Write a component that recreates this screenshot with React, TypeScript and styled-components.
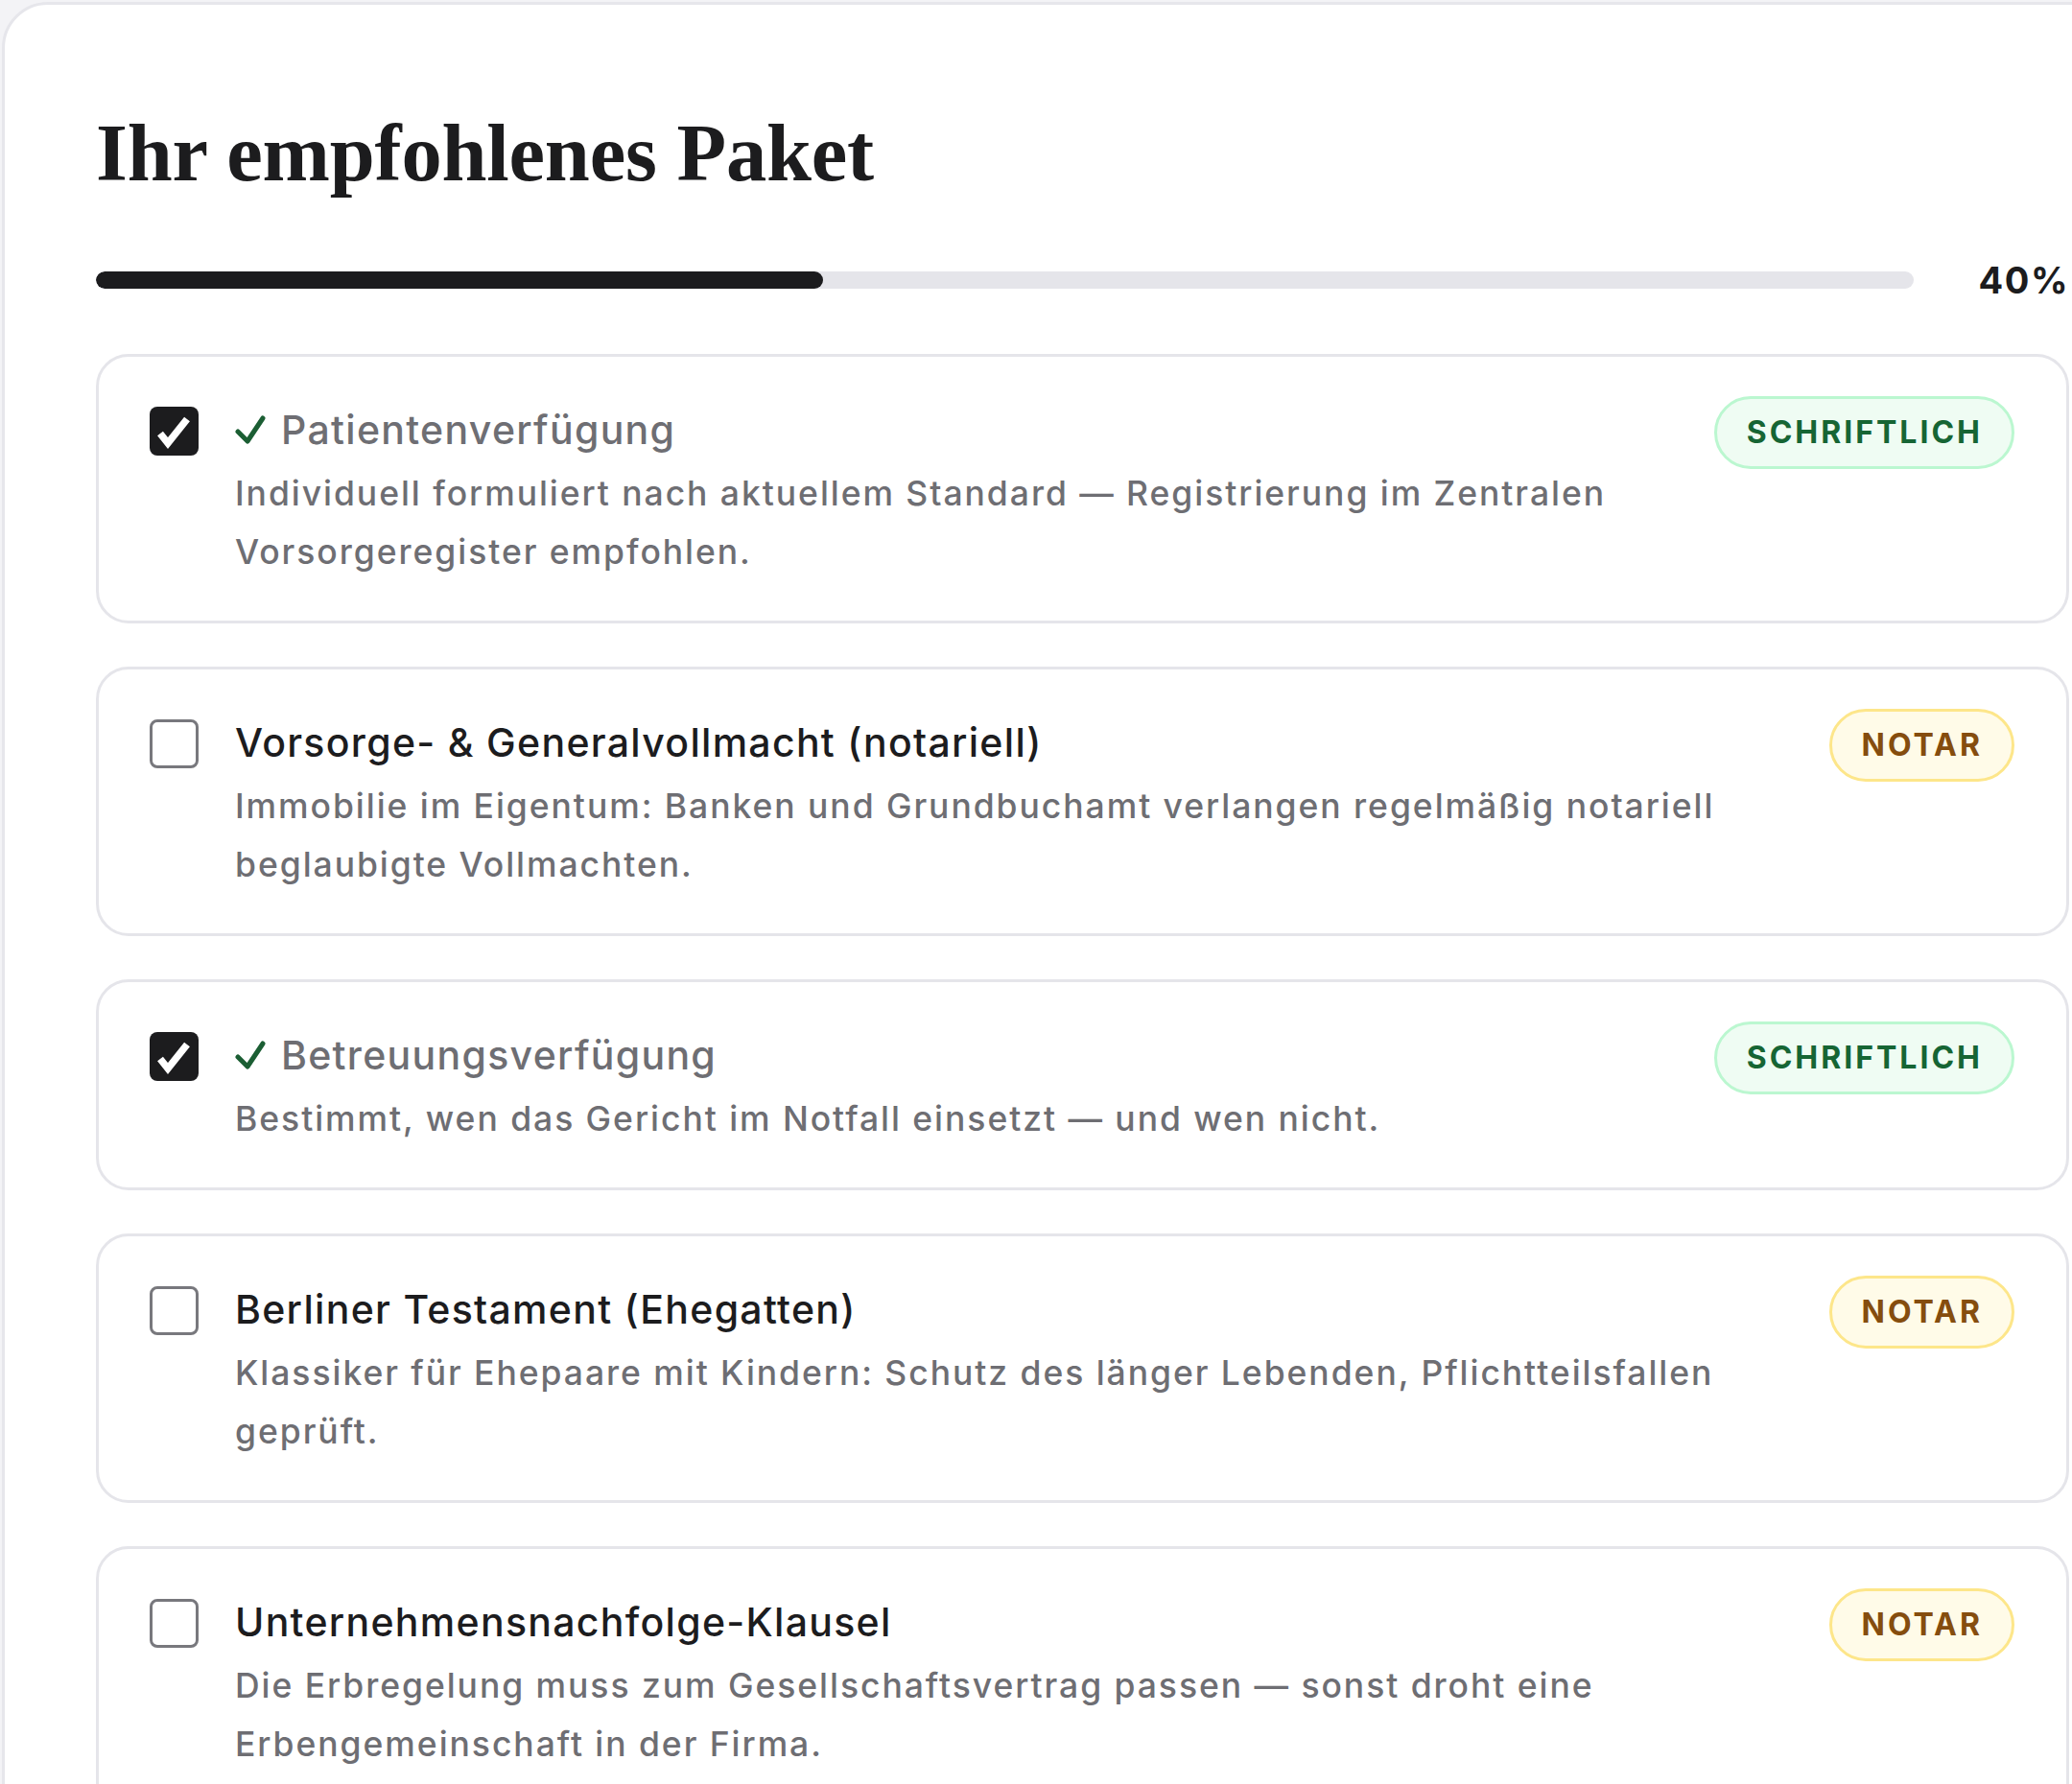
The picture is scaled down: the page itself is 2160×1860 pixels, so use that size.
import React from "react";
import styled, { createGlobalStyle } from "styled-components";

const GlobalStyle = createGlobalStyle`
  html, body {
    margin: 0;
    padding: 0;
    background: #f3f3f6;
    overflow: hidden;
  }

  body {
    font-family: Inter, "Noto Sans", sans-serif;
    color: #1c1c1e;
  }
`;

const Panel = styled.div`
  box-sizing: border-box;
  width: 2253px;
  min-height: 2000px;
  margin: 2px 0 0 2px;
  padding: 113px 95px 80px;
  background: #ffffff;
  border: 3px solid #e6e6eb;
  border-radius: 48px;
`;

const Heading = styled.h1`
  margin: 0 0 80px;
  font-family: "Liberation Serif", "Times New Roman", serif;
  font-weight: 700;
  font-size: 84.5px;
  line-height: 1;
  color: #1c1c1e;
  letter-spacing: -0.2px;
`;

const ProgressRow = styled.div`
  display: flex;
  align-items: center;
  gap: 68px;
  margin-bottom: 68px;
`;

const Track = styled.div`
  flex: 1;
  height: 18px;
  border-radius: 9px;
  background: #e5e5ea;
  overflow: hidden;
`;

const Fill = styled.div`
  height: 100%;
  border-radius: 9px;
  background: #1c1c1e;
`;

const Percent = styled.span`
  font-size: 38px;
  font-weight: 700;
  line-height: 18px;
  letter-spacing: 1.5px;
  color: #1c1c1e;
`;

const List = styled.div`
  display: flex;
  flex-direction: column;
  gap: 45px;
`;

const Card = styled.div`
  display: flex;
  align-items: flex-start;
  padding: 41px 54px 41px 53px;
  border: 3px solid #e5e5ea;
  border-radius: 34px;
  background: #ffffff;
`;

const Box = styled.div<{ $checked: boolean }>`
  box-sizing: border-box;
  flex: none;
  width: 51px;
  height: 51px;
  margin-top: 11px;
  margin-right: 38px;
  border-radius: 8px;
  display: flex;
  align-items: center;
  justify-content: center;
  background: ${(p) => (p.$checked ? "#1c1c1e" : "#ffffff")};
  border: ${(p) => (p.$checked ? "none" : "3px solid #78787d")};
`;

const Body = styled.div`
  flex: 1;
  min-width: 0;
  padding-right: 40px;
`;

const Title = styled.div<{ $done: boolean }>`
  display: flex;
  align-items: center;
  font-size: 41px;
  font-weight: 500;
  line-height: 70px;
  letter-spacing: 1.3px;
  color: ${(p) => (p.$done ? "#6e6e73" : "#1c1c1e")};
`;

const Desc = styled.p`
  margin: 1px 0 0;
  font-size: 35.5px;
  font-weight: 500;
  line-height: 61px;
  letter-spacing: 1.95px;
  color: #6e6e73;
`;

const badgeColors = {
  green: { fg: "#166534", bg: "#effcf3", line: "#bbf7d0" },
  amber: { fg: "#854d0e", bg: "#fffbe8", line: "#fde68a" },
};

const Badge = styled.span<{ $tone: "green" | "amber" }>`
  flex: none;
  box-sizing: border-box;
  height: 76px;
  padding: 0 30px 0 31px;
  display: flex;
  align-items: center;
  border-radius: 38px;
  font-size: 32px;
  font-weight: 700;
  letter-spacing: 3px;
  color: ${(p) => badgeColors[p.$tone].fg};
  background: ${(p) => badgeColors[p.$tone].bg};
  border: 3px solid ${(p) => badgeColors[p.$tone].line};
`;

const DoneMark = styled.svg`
  flex: none;
  margin-right: 16px;
  margin-top: 2px;
`;

interface IItem {
  title: string;
  desc: string;
  checked: boolean;
  badge: "SCHRIFTLICH" | "NOTAR";
}

const items: IItem[] = [
  {
    title: "Patientenverfügung",
    desc: "Individuell formuliert nach aktuellem Standard — Registrierung im Zentralen Vorsorgeregister empfohlen.",
    checked: true,
    badge: "SCHRIFTLICH",
  },
  {
    title: "Vorsorge- & Generalvollmacht (notariell)",
    desc: "Immobilie im Eigentum: Banken und Grundbuchamt verlangen regelmäßig notariell beglaubigte Vollmachten.",
    checked: false,
    badge: "NOTAR",
  },
  {
    title: "Betreuungsverfügung",
    desc: "Bestimmt, wen das Gericht im Notfall einsetzt — und wen nicht.",
    checked: true,
    badge: "SCHRIFTLICH",
  },
  {
    title: "Berliner Testament (Ehegatten)",
    desc: "Klassiker für Ehepaare mit Kindern: Schutz des länger Lebenden, Pflichtteilsfallen geprüft.",
    checked: false,
    badge: "NOTAR",
  },
  {
    title: "Unternehmensnachfolge-Klausel",
    desc: "Die Erbregelung muss zum Gesellschaftsvertrag passen — sonst droht eine Erbengemeinschaft in der Firma.",
    checked: false,
    badge: "NOTAR",
  },
];

const progress = 40;

const App = () => {
  return (
    <>
      <GlobalStyle />
      <Panel>
        <Heading>Ihr empfohlenes Paket</Heading>
        <ProgressRow>
          <Track>
            <Fill style={{ width: `${progress}%` }} />
          </Track>
          <Percent>{progress}%</Percent>
        </ProgressRow>
        <List>
          {items.map((item) => (
            <Card key={item.title}>
              <Box $checked={item.checked}>
                {item.checked && (
                  <svg width="51" height="51" viewBox="0 0 51 51">
                    <polyline
                      points="11,28 19,38 39,13"
                      fill="none"
                      stroke="#ffffff"
                      strokeWidth="7.5"
                      strokeLinejoin="miter"
                    />
                  </svg>
                )}
              </Box>
              <Body>
                <Title $done={item.checked}>
                  {item.checked && (
                    <DoneMark width="32" height="31" viewBox="0 0 32 31">
                      <polyline
                        points="3,17 13,27 29,3"
                        fill="none"
                        stroke="#1b5e33"
                        strokeWidth="5"
                        strokeLinecap="round"
                        strokeLinejoin="round"
                      />
                    </DoneMark>
                  )}
                  {item.title}
                </Title>
                <Desc>{item.desc}</Desc>
              </Body>
              <Badge $tone={item.badge === "NOTAR" ? "amber" : "green"}>{item.badge}</Badge>
            </Card>
          ))}
        </List>
      </Panel>
    </>
  );
};

export default App;
